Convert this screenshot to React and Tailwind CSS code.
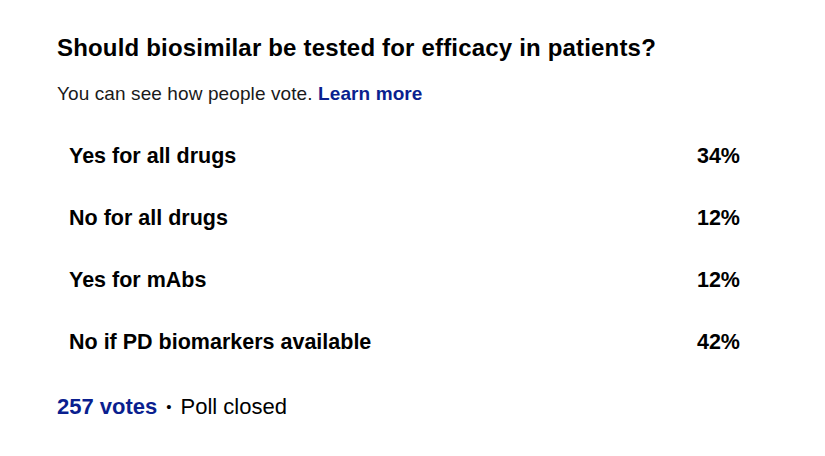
import React from "react";

const options = [
  { label: "Yes for all drugs", pct: "34%" },
  { label: "No for all drugs", pct: "12%" },
  { label: "Yes for mAbs", pct: "12%" },
  { label: "No if PD biomarkers available", pct: "42%" },
];

export default function App() {
  return (
    <div className="w-[825px] h-[456px] bg-white font-['Liberation_Sans',Arial,sans-serif] text-black">
      <div className="pl-[57px] pr-[73px] pt-[34px]">
        {/* Question */}
        <h1 className="text-[24px] leading-[28px] font-bold tracking-[0.18px]">
          Should biosimilar be tested for efficacy in patients?
        </h1>
        <p className="mt-[21px] text-[19px] leading-[22px] text-[#1a1a1a] tracking-[0.1px]">
          You can see how people vote.{" "}
          <span className="font-bold text-[#0a1f8f]">Learn more</span>
        </p>

        {/* Options */}
        <div className="mt-[27px] flex flex-col gap-[14px]">
          {options.map((o) => (
            <div
              key={o.label}
              className="h-[48px] flex items-center justify-between pl-[12px] pr-[12px] rounded-md"
            >
              <span className="text-[21.5px] font-bold">{o.label}</span>
              <span className="text-[21.5px] font-bold">{o.pct}</span>
            </div>
          ))}
        </div>

        {/* Footer */}
        <div className="mt-[28px] flex items-center text-[22px] leading-[26px]">
          <span className="font-bold text-[#0a1f8f]">257 votes</span>
          <span className="mx-[9px] text-[15px]">•</span>
          <span>Poll closed</span>
        </div>
      </div>
    </div>
  );
}
